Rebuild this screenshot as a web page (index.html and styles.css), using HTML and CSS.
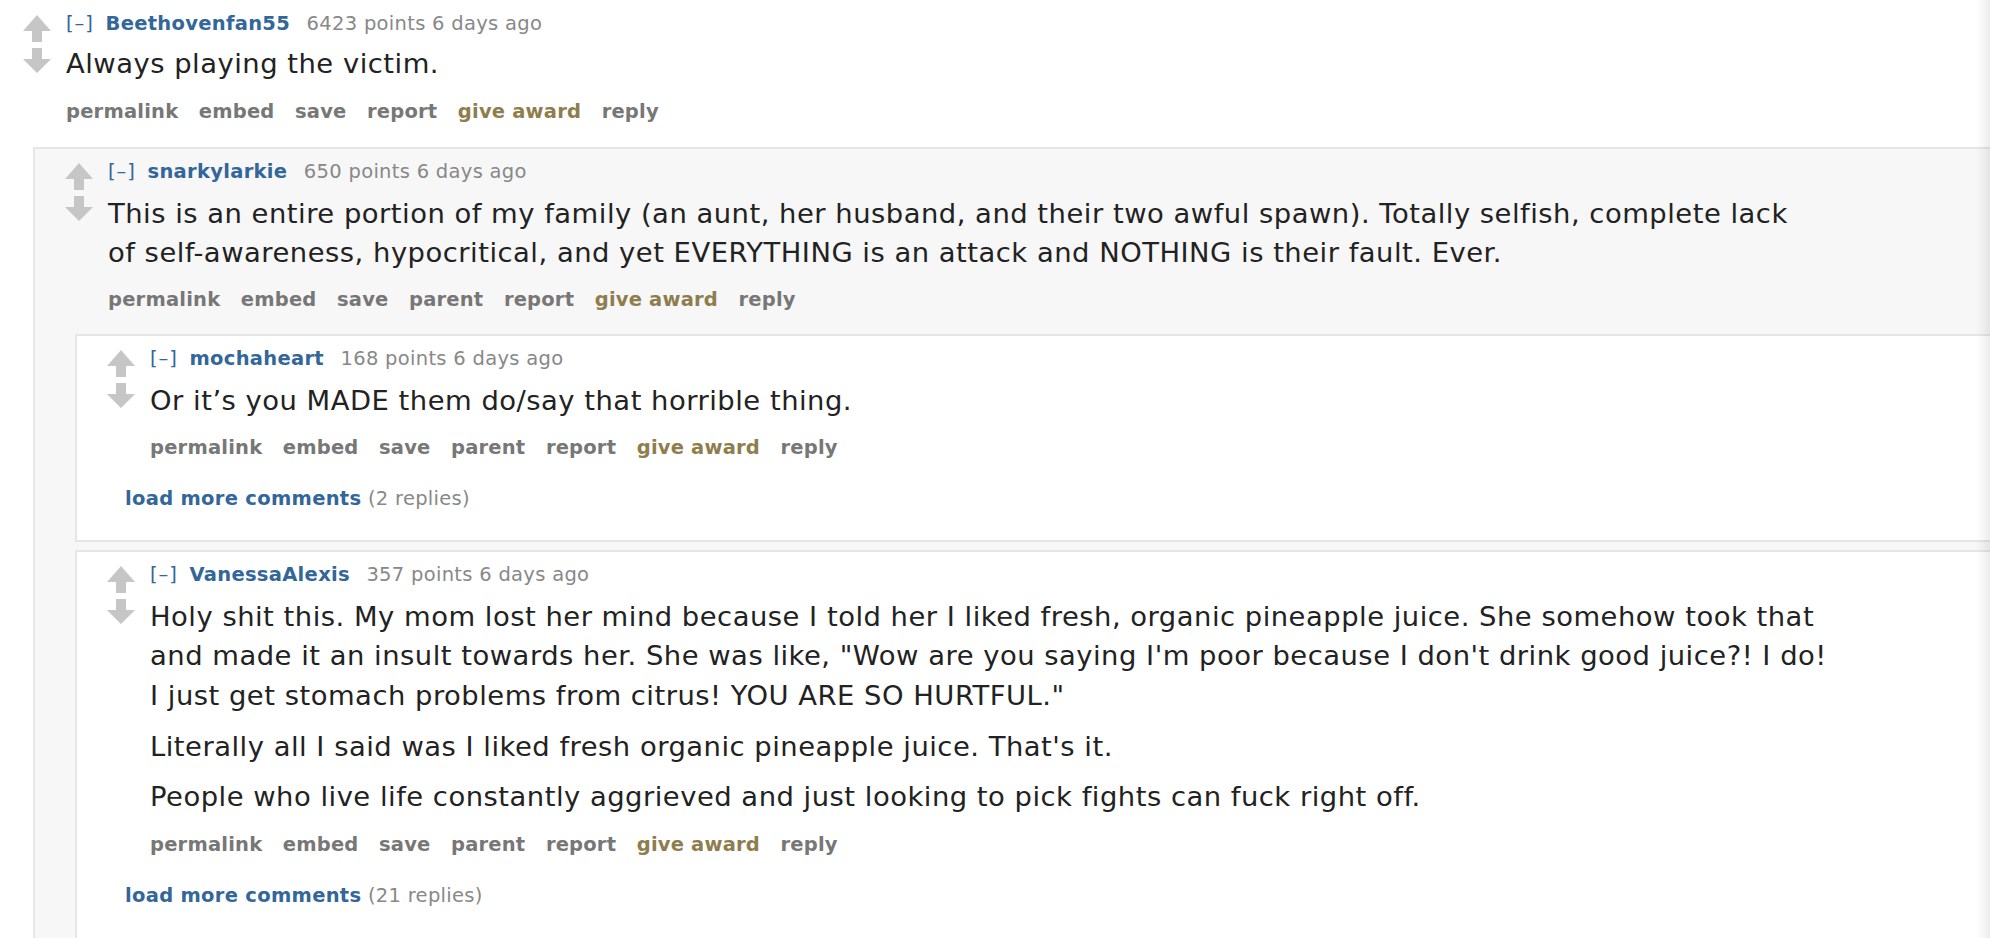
FILE: index.html
```html
<!DOCTYPE html>
<html lang="en">
<head>
<meta charset="utf-8">
<title>comments</title>
<link rel="stylesheet" href="styles.css">
</head>
<body>
<div class="comment top">
  <div class="row">
    <div class="midcol">
      <svg class="arrow up" viewBox="0 0 28 27" width="28" height="27"><polygon points="14,0 28,16 19,16 19,27 9,27 9,16 0,16"/></svg>
      <svg class="arrow down" viewBox="0 0 28 25" width="28" height="25"><polygon points="9,0 19,0 19,11 28,11 14,25 0,11 9,11"/></svg>
    </div>
    <div class="entry">
      <p class="tagline"><span class="expand">[–]</span> <span class="author">Beethovenfan55</span> <span class="meta">6423 points 6 days ago</span></p>
      <div class="md"><p>Always playing the victim.</p></div>
      <ul class="buttons"><li>permalink</li><li>embed</li><li>save</li><li>report</li><li class="award">give award</li><li>reply</li></ul>
    </div>
  </div>
  <div class="child first">
    <div class="comment nested even">
      <div class="row">
        <div class="midcol">
          <svg class="arrow up" viewBox="0 0 28 27" width="28" height="27"><polygon points="14,0 28,16 19,16 19,27 9,27 9,16 0,16"/></svg>
          <svg class="arrow down" viewBox="0 0 28 25" width="28" height="25"><polygon points="9,0 19,0 19,11 28,11 14,25 0,11 9,11"/></svg>
        </div>
        <div class="entry">
          <p class="tagline"><span class="expand">[–]</span> <span class="author">snarkylarkie</span> <span class="meta">650 points 6 days ago</span></p>
          <div class="md"><p>This is an entire portion of my family (an aunt, her husband, and their two awful spawn). Totally selfish, complete lack of self-awareness, hypocritical, and yet EVERYTHING is an attack and NOTHING is their fault. Ever.</p></div>
          <ul class="buttons"><li>permalink</li><li>embed</li><li>save</li><li>parent</li><li>report</li><li class="award">give award</li><li>reply</li></ul>
        </div>
      </div>
      <div class="child">
        <div class="comment nested odd">
          <div class="row">
            <div class="midcol">
              <svg class="arrow up" viewBox="0 0 28 27" width="28" height="27"><polygon points="14,0 28,16 19,16 19,27 9,27 9,16 0,16"/></svg>
              <svg class="arrow down" viewBox="0 0 28 25" width="28" height="25"><polygon points="9,0 19,0 19,11 28,11 14,25 0,11 9,11"/></svg>
            </div>
            <div class="entry">
              <p class="tagline"><span class="expand">[–]</span> <span class="author">mochaheart</span> <span class="meta">168 points 6 days ago</span></p>
              <div class="md"><p>Or it’s you MADE them do/say that horrible thing.</p></div>
              <ul class="buttons"><li>permalink</li><li>embed</li><li>save</li><li>parent</li><li>report</li><li class="award">give award</li><li>reply</li></ul>
            </div>
          </div>
          <p class="more"><span class="morelink">load more comments</span> <span class="count">(2 replies)</span></p>
        </div>
        <div class="comment nested odd last">
          <div class="row">
            <div class="midcol">
              <svg class="arrow up" viewBox="0 0 28 27" width="28" height="27"><polygon points="14,0 28,16 19,16 19,27 9,27 9,16 0,16"/></svg>
              <svg class="arrow down" viewBox="0 0 28 25" width="28" height="25"><polygon points="9,0 19,0 19,11 28,11 14,25 0,11 9,11"/></svg>
            </div>
            <div class="entry">
              <p class="tagline"><span class="expand">[–]</span> <span class="author">VanessaAlexis</span> <span class="meta">357 points 6 days ago</span></p>
              <div class="md">
                <p>Holy shit this. My mom lost her mind because I told her I liked fresh, organic pineapple juice. She somehow took that and made it an insult towards her. She was like, "Wow are you saying I'm poor because I don't drink good juice?! I do! I just get stomach problems from citrus! YOU ARE SO HURTFUL."</p>
                <p>Literally all I said was I liked fresh organic pineapple juice. That's it.</p>
                <p>People who live life constantly aggrieved and just looking to pick fights can fuck right off.</p>
              </div>
              <ul class="buttons"><li>permalink</li><li>embed</li><li>save</li><li>parent</li><li>report</li><li class="award">give award</li><li>reply</li></ul>
            </div>
          </div>
          <p class="more"><span class="morelink">load more comments</span> <span class="count">(21 replies)</span></p>
        </div>
      </div>
    </div>
  </div>
</div>
<div class="edge-shade"></div>
</body>
</html>
```
FILE: styles.css
```css
html, body {
  margin: 0;
  padding: 0;
  background: #ffffff;
  overflow: hidden;
}
body {
  font-family: "DejaVu Sans", Verdana, sans-serif;
  color: #222222;
  height: 938px;
}
.comment.top {
  padding: 12px 0 0 23px;
}
.row {
  display: flex;
  align-items: flex-start;
}
.midcol {
  width: 28px;
  flex: none;
  display: flex;
  flex-direction: column;
  align-items: center;
  gap: 6px;
  padding-top: 3px;
}
.arrow {
  display: block;
  fill: #c6c6c6;
}
.entry {
  margin-left: 15px;
  min-width: 0;
}
.tagline {
  margin: 0;
  font-size: 19.5px;
  line-height: 24px;
  letter-spacing: 0.3px;
  color: #888888;
  white-space: nowrap;
}
.expand {
  color: #336699;
  letter-spacing: 1px;
  margin-right: 5px;
}
.author {
  color: #336699;
  font-weight: bold;
  margin-right: 10px;
}
.md {
  margin-top: 10px;
  font-size: 27.4px;
  line-height: 39.3px;
  letter-spacing: 0.5px;
  max-width: 1686px;
}
.top > .row .md {
  margin-top: 7.5px;
}
.top > .row .buttons {
  margin-top: 17.5px;
}
.md p {
  margin: 0;
}
.md p + p {
  margin-top: 11.5px;
}
.buttons {
  list-style: none;
  margin: 16px 0 0 0;
  padding: 0;
  display: flex;
  gap: 20.5px;
  font-size: 19.5px;
  line-height: 24px;
  letter-spacing: 0.2px;
  font-weight: bold;
  color: #777777;
}
.buttons .award {
  color: #8e7d4d;
}
.child {
  display: flex;
  flex-direction: column;
  gap: 8px;
  margin: 21.5px 0 0 10px;
}
.child.first {
  margin-top: 22.5px;
}
.comment.nested {
  border: 2px solid #e6e6e6;
  border-right: none;
  padding: 11px 0 0 30px;
}
.comment.nested.even {
  background: #f7f7f8;
}
.comment.nested.odd {
  background: #ffffff;
  padding-bottom: 29px;
}
.comment.nested.odd.last {
  padding-bottom: 36px;
}
.more {
  margin: 27px 0 0 18px;
  font-size: 19.5px;
  line-height: 24px;
  letter-spacing: 0.3px;
}
.morelink {
  color: #336699;
  font-weight: bold;
}
.count {
  color: #888888;
}
.edge-shade {
  position: fixed;
  top: 0;
  right: 0;
  width: 14px;
  height: 100%;
  background: linear-gradient(to right, rgba(0,0,0,0), rgba(0,0,0,0.07));
  pointer-events: none;
}
```
